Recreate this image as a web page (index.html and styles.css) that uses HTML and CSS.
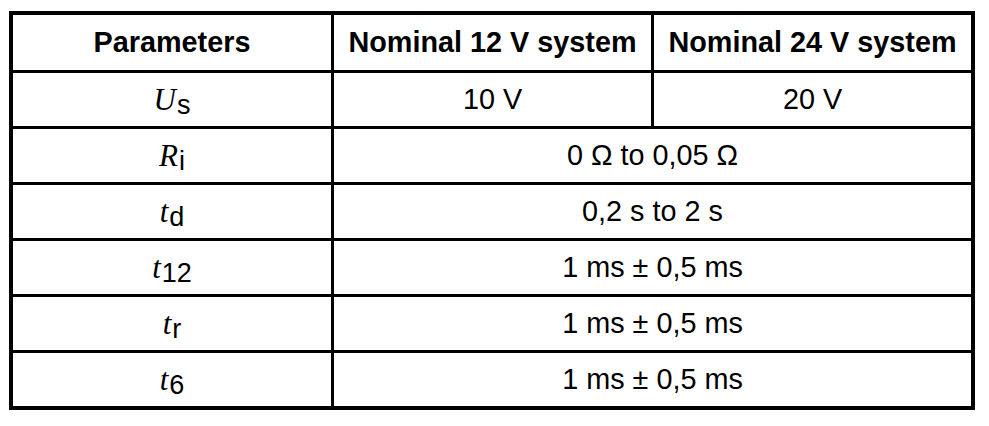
FILE: index.html
```html
<!DOCTYPE html>
<html>
<head>
<meta charset="utf-8">
<link rel="stylesheet" href="styles.css">
</head>
<body>
<div class="table">
  <div class="cell head">Parameters</div>
  <div class="cell head">Nominal 12 V system</div>
  <div class="cell head">Nominal 24 V system</div>

  <div class="cell"><span class="sym">U</span><span class="sub">s</span></div>
  <div class="cell">10 V</div>
  <div class="cell">20 V</div>

  <div class="cell"><span class="sym">R</span><span class="sub">i</span></div>
  <div class="cell span2">0 Ω to 0,05 Ω</div>

  <div class="cell"><span class="sym">t</span><span class="sub">d</span></div>
  <div class="cell span2">0,2 s to 2 s</div>

  <div class="cell"><span class="sym">t</span><span class="sub">12</span></div>
  <div class="cell span2">1 ms ± 0,5 ms</div>

  <div class="cell"><span class="sym">t</span><span class="sub">r</span></div>
  <div class="cell span2">1 ms ± 0,5 ms</div>

  <div class="cell"><span class="sym">t</span><span class="sub">6</span></div>
  <div class="cell span2">1 ms ± 0,5 ms</div>
</div>
</body>
</html>
```
FILE: styles.css
```css
html, body {
  margin: 0;
  padding: 0;
  background: #fff;
}
body {
  padding: 11px 0 0 9px;
  font-family: "Liberation Sans", Arial, sans-serif;
  font-size: 28.8px;
  color: #000;
}
.table {
  display: grid;
  grid-template-columns: 318px 317px 317px;
  grid-template-rows: 55px repeat(6, 53px);
  gap: 3px;
  padding: 4px;
  background: #000;
  width: max-content;
}
.cell {
  background: #fff;
  display: flex;
  align-items: center;
  justify-content: center;
  line-height: 1;
  white-space: nowrap;
}
.head {
  font-weight: bold;
}
.span2 {
  grid-column: span 2;
}
.sym {
  font-family: "Liberation Serif", "Times New Roman", serif;
  font-style: italic;
  font-size: 31px;
}
.sub {
  font-size: 27px;
  position: relative;
  top: 6px;
  margin-left: 1px;
}
```
